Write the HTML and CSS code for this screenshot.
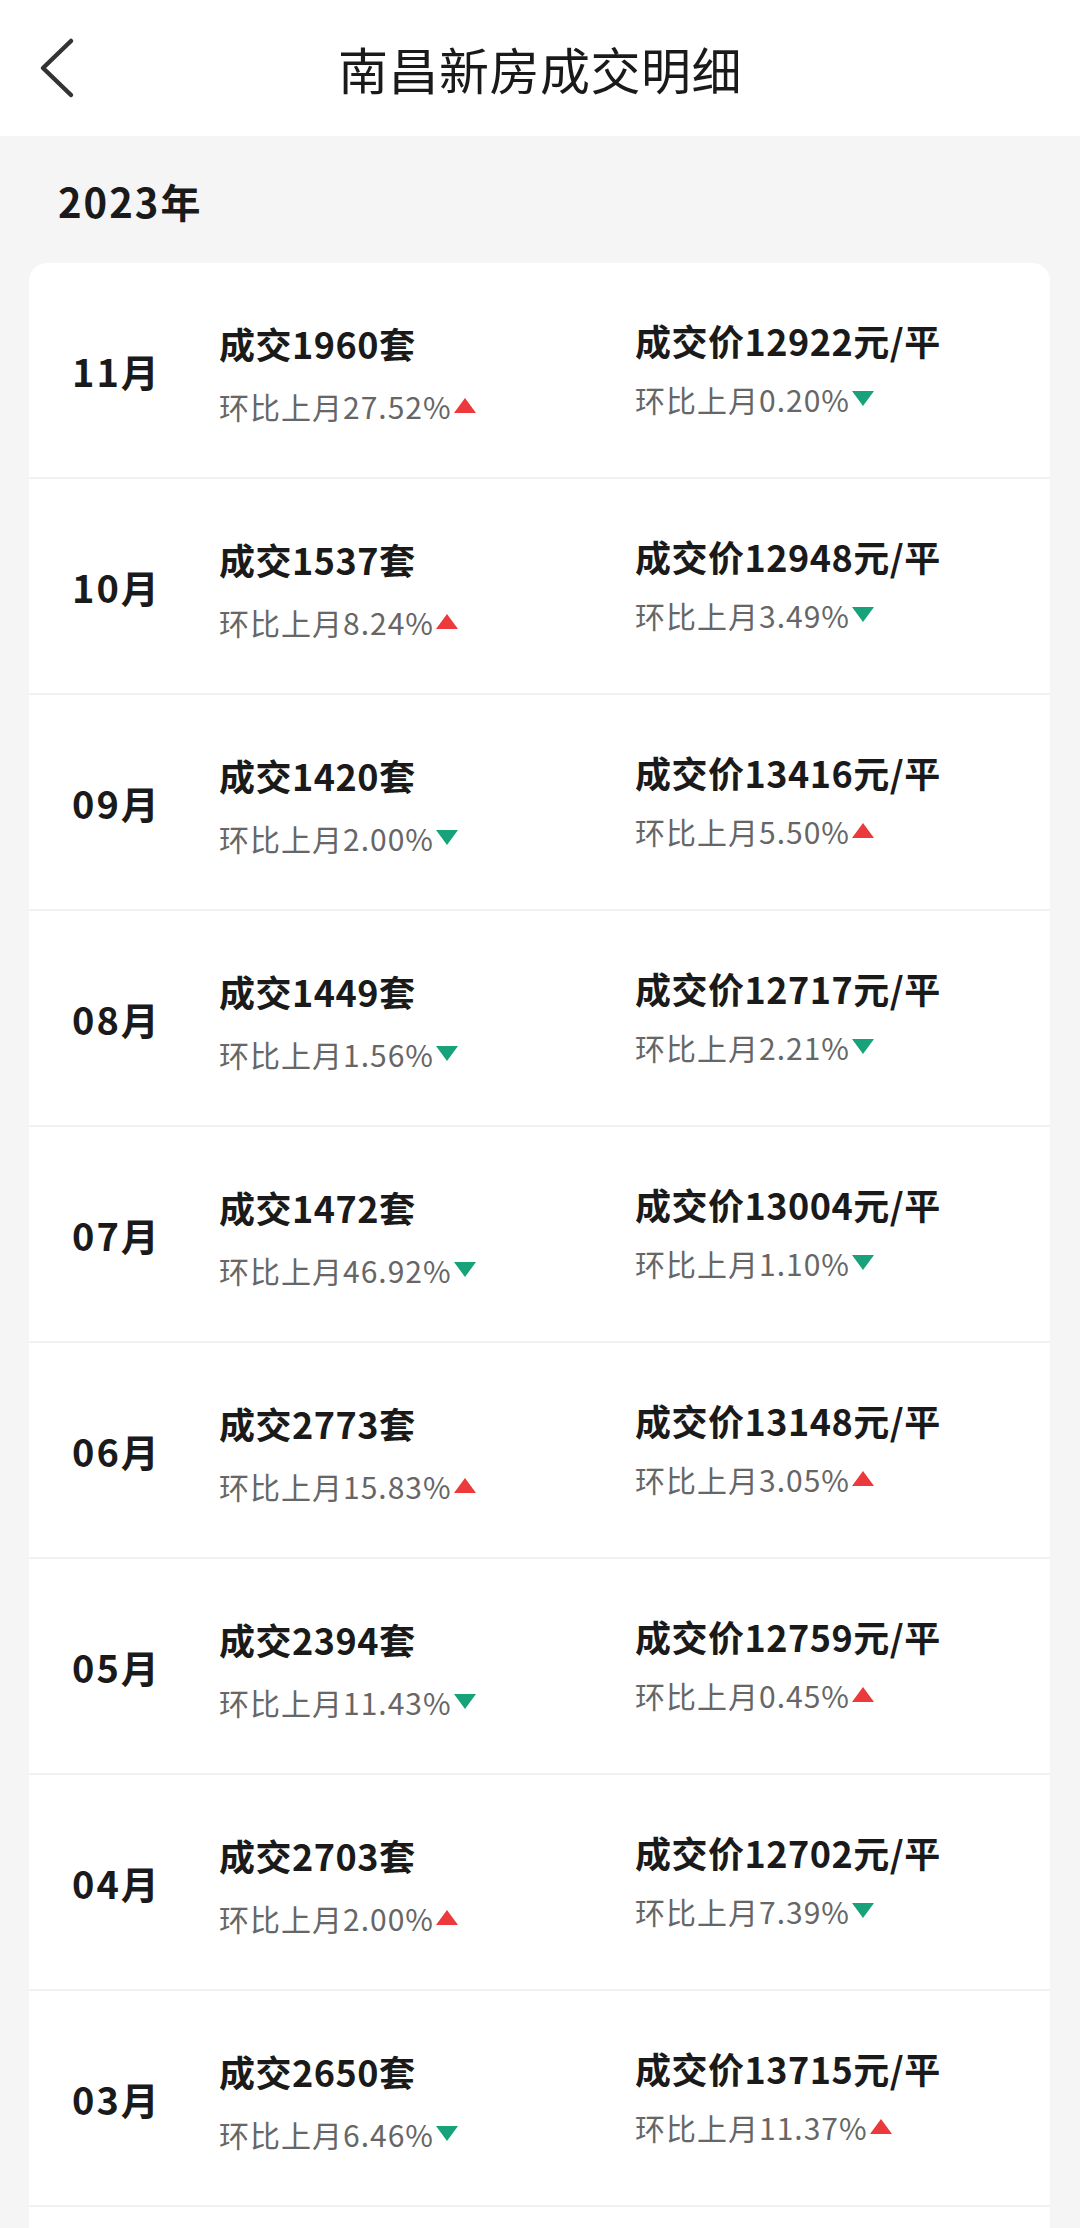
FILE: index.html
```html
<!DOCTYPE html>
<html lang="zh-CN">
<head>
<meta charset="utf-8">
<title>南昌新房成交明细</title>
<link rel="stylesheet" href="styles.css">
</head>
<body>
<header class="topbar">
  <div class="back">
    <svg width="40" height="64" viewBox="0 0 40 64"><path d="M33 5 L5 32 L33 59" fill="none" stroke="#333" stroke-width="4.5" stroke-linecap="round" stroke-linejoin="round"/></svg>
  </div>
  <h1 class="title">南昌新房成交明细</h1>
  <div></div>
</header>
<main class="content">
  <h2 class="year">2023年</h2>
  <section class="card">
    <div class="row">
      <div class="month">11月</div>
      <div class="col left"><div class="main">成交1960套</div><div class="sub">环比上月27.52%<i class="tri up"></i></div></div>
      <div class="col"><div class="main">成交价12922元/平</div><div class="sub">环比上月0.20%<i class="tri down"></i></div></div>
    </div>
    <div class="row">
      <div class="month">10月</div>
      <div class="col left"><div class="main">成交1537套</div><div class="sub">环比上月8.24%<i class="tri up"></i></div></div>
      <div class="col"><div class="main">成交价12948元/平</div><div class="sub">环比上月3.49%<i class="tri down"></i></div></div>
    </div>
    <div class="row">
      <div class="month">09月</div>
      <div class="col left"><div class="main">成交1420套</div><div class="sub">环比上月2.00%<i class="tri down"></i></div></div>
      <div class="col"><div class="main">成交价13416元/平</div><div class="sub">环比上月5.50%<i class="tri up"></i></div></div>
    </div>
    <div class="row">
      <div class="month">08月</div>
      <div class="col left"><div class="main">成交1449套</div><div class="sub">环比上月1.56%<i class="tri down"></i></div></div>
      <div class="col"><div class="main">成交价12717元/平</div><div class="sub">环比上月2.21%<i class="tri down"></i></div></div>
    </div>
    <div class="row">
      <div class="month">07月</div>
      <div class="col left"><div class="main">成交1472套</div><div class="sub">环比上月46.92%<i class="tri down"></i></div></div>
      <div class="col"><div class="main">成交价13004元/平</div><div class="sub">环比上月1.10%<i class="tri down"></i></div></div>
    </div>
    <div class="row">
      <div class="month">06月</div>
      <div class="col left"><div class="main">成交2773套</div><div class="sub">环比上月15.83%<i class="tri up"></i></div></div>
      <div class="col"><div class="main">成交价13148元/平</div><div class="sub">环比上月3.05%<i class="tri up"></i></div></div>
    </div>
    <div class="row">
      <div class="month">05月</div>
      <div class="col left"><div class="main">成交2394套</div><div class="sub">环比上月11.43%<i class="tri down"></i></div></div>
      <div class="col"><div class="main">成交价12759元/平</div><div class="sub">环比上月0.45%<i class="tri up"></i></div></div>
    </div>
    <div class="row">
      <div class="month">04月</div>
      <div class="col left"><div class="main">成交2703套</div><div class="sub">环比上月2.00%<i class="tri up"></i></div></div>
      <div class="col"><div class="main">成交价12702元/平</div><div class="sub">环比上月7.39%<i class="tri down"></i></div></div>
    </div>
    <div class="row">
      <div class="month">03月</div>
      <div class="col left"><div class="main">成交2650套</div><div class="sub">环比上月6.46%<i class="tri down"></i></div></div>
      <div class="col"><div class="main">成交价13715元/平</div><div class="sub">环比上月11.37%<i class="tri up"></i></div></div>
    </div>
  </section>
</main>
</body>
</html>
```

FILE: styles.css
```css
* { box-sizing: border-box; }
html, body {
  margin: 0;
  padding: 0;
  background: #f5f5f5;
  font-family: "Noto Sans CJK SC", "Noto Sans", sans-serif;
  color: #1a1a1a;
}
.topbar {
  height: 136px;
  background: #ffffff;
  display: grid;
  grid-template-columns: 1fr auto 1fr;
  align-items: center;
}
.back {
  padding-left: 38px;
  display: flex;
  align-items: center;
}
.back svg { display: block; }
.title {
  margin: 0;
  font-size: 50px;
  font-weight: 400;
  line-height: 1;
  color: #1a1a1a;
  letter-spacing: 0.5px;
}
.content {
  padding: 0 30px 0 29px;
}
.year {
  margin: 0;
  padding: 37px 0 0 29px;
  height: 127px;
  font-size: 40px;
  font-weight: 700;
  line-height: 56px;
  letter-spacing: 2px;
  color: #1a1a1a;
}
.card {
  background: #ffffff;
  border-radius: 18px;
  padding-bottom: 60px;
}
.row {
  height: 216px;
  border-bottom: 2px solid #f1f1f1;
  display: grid;
  grid-template-columns: 147px 416px 1fr;
  align-items: center;
  padding-left: 43px;
}
.month {
  font-size: 38px;
  font-weight: 700;
  line-height: 1;
  padding-top: 2px;
  letter-spacing: 2px;
}
.col {
  display: flex;
  flex-direction: column;
}
.col.left {
  padding-top: 10px;
}
.main {
  font-size: 36px;
  font-weight: 700;
  line-height: 58px;
  letter-spacing: 0.5px;
  white-space: nowrap;
}
.sub {
  font-size: 30px;
  font-weight: 400;
  color: #666666;
  line-height: 60px;
  letter-spacing: 1px;
  white-space: nowrap;
  display: flex;
  align-items: center;
}
.col.left .sub { margin-top: 4px; }
.tri {
  display: inline-block;
  width: 0;
  height: 0;
  margin-left: 2px;
  border-left: 11px solid transparent;
  border-right: 11px solid transparent;
}
.tri.up {
  border-bottom: 15px solid #ec3a3c;
  margin-top: -2px;
}
.tri.down {
  border-top: 15px solid #17a27a;
  margin-top: -2px;
}
```
